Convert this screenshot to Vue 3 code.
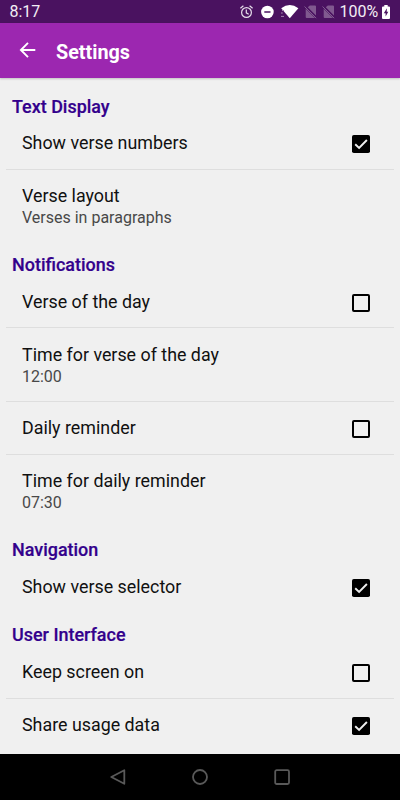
<template>
  <div class="screen">
    <div class="status-bar">
      <span class="clock">8:17</span>
      <svg class="status-icons" width="106" height="23" viewBox="0 0 106 23">
        <!-- alarma -->
        <g fill="none" stroke="#e6deea" stroke-width="1.2">
          <circle cx="9.5" cy="12.5" r="4.9" />
          <path d="M9.3 9.5v3.3l2.4 1.5M3.4 8.3l3-2.5M15.6 8.3l-3-2.5" />
        </g>
        <!-- no molestar -->
        <circle cx="30.4" cy="12" r="6.3" fill="#fff" />
        <path d="M27.3 12h6.2" stroke="#4a1260" stroke-width="1.5" />
        <!-- wifi -->
        <path d="M44.2 8.3Q52.8 1.7 61.4 8.3L52.8 18.2z" fill="#fff" />
        <path d="M44 13h1.8M44 16.4h3M45 10.5h2" stroke="#a488b0" stroke-width="1" />
        <!-- sin SIM -->
        <g v-for="x in [67, 85]" :key="x" :transform="`translate(${x} 0)`">
          <path d="M3.8 7.3L5.8 5.6H11q1 0 1 1V15.5zM1.7 8.8L11 18H2.7q-1 0-1-1z" fill="#80598f" />
          <path d="M.5 6.5L12.2 18.2" stroke="#80598f" stroke-width="1" />
        </g>
      </svg>
      <span class="battery-text">100%</span>
      <svg class="battery" width="8" height="14" viewBox="0 0 8 14">
        <path d="M2.3 0h3.4v1.4H7q1 0 1 1V13q0 1-1 1H1q-1 0-1-1V2.4q0-1 1-1h1.3z" fill="#fff" />
        <path d="M4.9 3.3L1.8 8.2h1.8v3.3L6.3 6.7H4.7z" fill="#4a1260" />
      </svg>
    </div>

    <div class="app-bar">
      <svg class="back" width="24" height="24" viewBox="0 0 24 24">
        <path d="M19.3 12H5.2M12 4.9L4.9 12l7.1 7.1" fill="none" stroke="#fff" stroke-width="1.9" />
      </svg>
      <h1>Settings</h1>
    </div>

    <div class="settings">
      <section v-for="section in sections" :key="section.title">
        <h2>{{ section.title }}</h2>
        <div
          v-for="item in section.items"
          :key="item.title"
          class="item"
          :class="{ 'two-lines': item.summary }"
          @click="toggle(item)"
        >
          <div>
            <div class="item-title">{{ item.title }}</div>
            <div v-if="item.summary" class="item-summary">{{ item.summary }}</div>
          </div>
          <svg v-if="'checked' in item" class="checkbox" width="18" height="18" viewBox="0 0 18 18">
            <template v-if="item.checked">
              <rect width="18" height="18" rx="1.8" fill="#000" />
              <path d="M3.2 9.2l3.9 3.8 7.8-8" fill="none" stroke="#efefef" stroke-width="1.9" />
            </template>
            <rect v-else x="1" y="1" width="16" height="16" rx="1" fill="none" stroke="#000" stroke-width="2" />
          </svg>
        </div>
      </section>
    </div>

    <div class="nav-bar">
      <svg width="16" height="16" viewBox="0 0 16 16">
        <path d="M14.3 1.2v13.6L1.3 8z" />
      </svg>
      <svg width="16" height="16" viewBox="0 0 16 16">
        <circle cx="8" cy="8" r="7" />
      </svg>
      <svg width="16" height="16" viewBox="0 0 16 16">
        <rect x="1.2" y="1.2" width="13.8" height="13.8" rx="1.5" />
      </svg>
    </div>
  </div>
</template>

<script setup>
import { ref } from 'vue';

const sections = ref([
  {
    title: 'Text Display',
    items: [
      { title: 'Show verse numbers', checked: true },
      { title: 'Verse layout', summary: 'Verses in paragraphs' }
    ]
  },
  {
    title: 'Notifications',
    items: [
      { title: 'Verse of the day', checked: false },
      { title: 'Time for verse of the day', summary: '12:00' },
      { title: 'Daily reminder', checked: false },
      { title: 'Time for daily reminder', summary: '07:30' }
    ]
  },
  {
    title: 'Navigation',
    items: [{ title: 'Show verse selector', checked: true }]
  },
  {
    title: 'User Interface',
    items: [
      { title: 'Keep screen on', checked: false },
      { title: 'Share usage data', checked: true }
    ]
  }
]);

function toggle(item) {
  if ('checked' in item) {
    item.checked = !item.checked;
  }
}
</script>

<style>
body {
  margin: 0;
}
</style>

<style scoped>
.screen {
  width: 400px;
  height: 800px;
  display: flex;
  flex-direction: column;
  overflow: hidden;
  background: #f0f0f0;
  font-family: Roboto, "Liberation Sans", sans-serif;
}

.status-bar {
  flex: none;
  height: 23px;
  display: flex;
  align-items: center;
  box-sizing: border-box;
  padding: 0 10px 0 9.5px;
  background: #4a1260;
  color: #f3eef5;
  font-size: 16px;
  line-height: 25px;
}

.status-icons {
  margin-left: auto;
}

.battery-text {
  width: 39px;
  margin: 0 3.5px 0 -3.5px;
}

.app-bar {
  flex: none;
  height: 54.5px;
  display: flex;
  align-items: center;
  padding-left: 15.5px;
  background: #9c27b0;
  box-shadow: 0 1px 2px rgba(0, 0, 0, 0.2);
}

.back {
  margin-top: -1px;
}

h1 {
  margin: 4px 0 0 16.5px;
  color: #fff;
  font-size: 19.8px;
  font-weight: 700;
}

.settings {
  flex: 1;
  padding-top: 7px;
}

h2 {
  height: 32.4px;
  margin: 0 0 0 12px;
  line-height: 43px;
  font-size: 17.95px;
  font-weight: 500;
  color: #33008c;
  -webkit-text-stroke: 0.2px #33008c;
}

.item {
  height: 52.7px;
  box-sizing: border-box;
  margin: 0 6px;
  padding: 0.4px 24px 0 16px;
  display: flex;
  align-items: center;
  justify-content: space-between;
  border-bottom: 1px solid #dedede;
}

.item:last-child {
  border-bottom-color: transparent;
}

.two-lines {
  height: 73.7px;
  padding-top: 1.6px;
}

.item-title {
  font-size: 17.85px;
  line-height: 22px;
  color: #111;
}

.item-summary {
  font-size: 16px;
  line-height: 21px;
  color: #484848;
}

.checkbox {
  margin-top: 2px;
}

.nav-bar {
  flex: none;
  height: 46.5px;
  display: flex;
  align-items: center;
  justify-content: center;
  gap: 66px;
  background: #000;
}

.nav-bar svg {
  fill: none;
  stroke: #595959;
  stroke-width: 1.8;
  stroke-linejoin: round;
}
</style>
